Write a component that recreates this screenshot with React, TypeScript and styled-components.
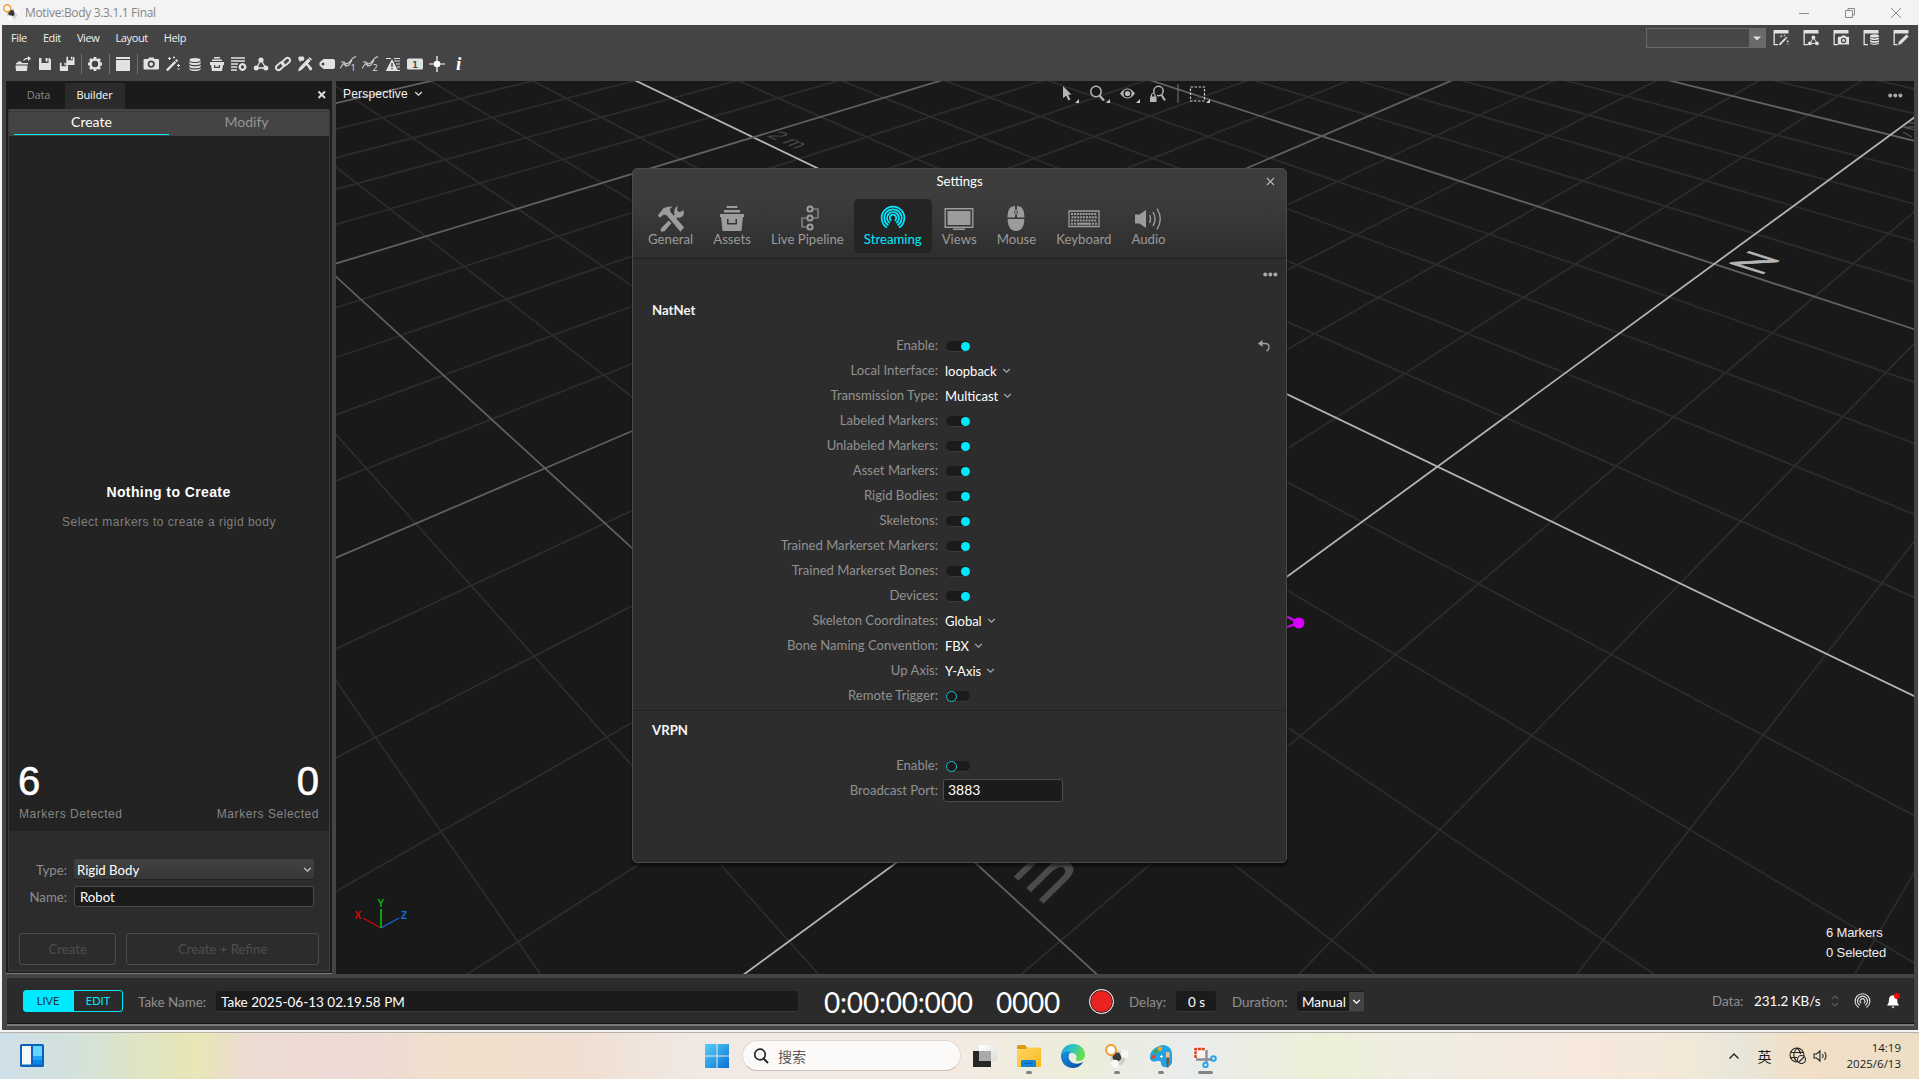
import React from 'react';
import styled, { createGlobalStyle } from 'styled-components';

const CYAN = '#00eaff';
const LATO = 'Lato, "Noto Sans", sans-serif';
const ARIAL = '"Liberation Sans", Arial, sans-serif';
const SEGOE = '"Open Sans", "Noto Sans CJK SC", sans-serif';

const GlobalStyle = createGlobalStyle`
  * { box-sizing: border-box; }
  html, body { margin: 0; padding: 0; overflow: hidden; }
  body { background: #f3f3f3; font-family: ${LATO}; font-size: 13.2px; }
  svg { display: block; flex: none; }
`;

/* ---------- shell ---------- */

const Desktop = styled.div`
  width: 1919px;
  height: 1079px;
  display: flex;
  flex-direction: column;
  overflow: hidden;
  background: #f3f3f3;
`;

const TitleBar = styled.header`
  flex: none;
  height: 25px;
  display: flex;
  align-items: center;
  padding: 0 17px 0 3px;
  background: #f3f3f3;
  color: #868686;
  font: 12px/25px ${SEGOE};
`;

const TitleText = styled.span`
  margin-left: 5px;
  flex: 1;
  letter-spacing: -0.33px;
`;

const WindowButtons = styled.div`
  display: flex;
  gap: 34px;
`;

const AppFrame = styled.div`
  flex: none;
  height: 1005px;
  margin: 0 1px 0 2px;
  background: #444;
  display: flex;
  flex-direction: column;
`;

const TopBars = styled.div`
  flex: none;
  height: 56px;
  display: flex;
  justify-content: space-between;
`;

const MenuRow = styled.nav`
  display: flex;
  gap: 16px;
  padding: 5px 0 0 9px;
  height: 28px;
  color: #f0f0f0;
  font: 11px/16px ${SEGOE};
  letter-spacing: -0.38px;
`;

const ToolRow = styled.div`
  display: flex;
  align-items: center;
  height: 22px;
  padding-left: 10px;
`;

const ToolCell = styled.div`
  width: 22px;
  height: 22px;
  display: flex;
  align-items: center;
  justify-content: center;
`;

const ToolSep = styled.div`
  width: 6px;
  height: 20px;
  display: flex;
  justify-content: center;
  &::before { content: ''; width: 1px; background: #6d6d6d; }
`;

const LayoutTools = styled.div`
  display: flex;
  align-items: center;
  height: 20px;
  margin: 3px 9px 0 0;
`;

const LayoutCombo = styled.div`
  width: 120px;
  height: 20px;
  border: 1px solid #6a6a6a;
  background: #474747;
  display: flex;
  justify-content: flex-end;
  margin-right: 6px;
`;

const ComboArrow = styled.div`
  width: 16px;
  background: #6a6a6a;
  display: flex;
  align-items: center;
  justify-content: center;
`;

const LayoutCell = styled.div`
  width: 30px;
  display: flex;
  padding-left: 1px;
  &:last-child { width: 17px; }
`;

const Main = styled.main`
  flex: none;
  height: 893px;
  display: flex;
  gap: 4px;
  padding: 0 4px 0 4px;
`;

/* ---------- left panel ---------- */

const Panel = styled.aside`
  width: 326px;
  flex: none;
  display: flex;
  flex-direction: column;
  background: #2c2c2c;
  border-bottom: 1px solid #777;
`;

const DockTabs = styled.div`
  flex: none;
  height: 28px;
  background: #1b1b1b;
  display: flex;
  align-items: flex-end;
  font: 11px/24px ${SEGOE};
  letter-spacing: -0.1px;
`;

const DockTab = styled.div<{ $active?: boolean }>`
  height: 26px;
  width: ${p => (p.$active ? 60 : 59)}px;
  padding-left: ${p => (p.$active ? 0 : 6)}px;
  padding-right: ${p => (p.$active ? 1 : 0)}px;
  text-align: center;
  color: ${p => (p.$active ? '#fff' : '#8b8b8b')};
  background: ${p => (p.$active ? '#2b2b2b' : 'transparent')};
`;

const DockClose = styled.div`
  margin-left: auto;
  width: 15px;
  height: 28px;
  display: flex;
  align-items: center;
`;

const PanelInner = styled.div`
  flex: 1;
  display: flex;
  flex-direction: column;
  border: solid #1d1d1d;
  border-width: 0 2px 1px;
  outline: 1px solid #3a3a3a;
  outline-offset: -3px;
  padding: 0 1px 2px;
`;

const SubTabs = styled.div`
  flex: none;
  height: 27px;
  display: flex;
  background: #444;
  padding: 0 5px;
`;

const SubTab = styled.div<{ $active?: boolean }>`
  flex: 1;
  height: 26px;
  text-align: center;
  line-height: 26px;
  font-size: 14px;
  color: ${p => (p.$active ? '#fff' : '#969696')};
  border-bottom: 1.5px solid ${p => (p.$active ? CYAN : 'transparent')};
`;

const CreateBody = styled.div`
  flex: none;
  height: 695px;
  background: #232323;
  display: flex;
  flex-direction: column;
  font-family: ${ARIAL};
  padding: 0 10px;
`;

const EmptyState = styled.div`
  margin-top: 347px;
  text-align: center;
`;

const EmptyTitle = styled.div`
  color: #fff;
  font-weight: 700;
  font-size: 14px;
  line-height: 18px;
  letter-spacing: 0.4px;
  padding-right: 1px;
`;

const EmptyHint = styled.div`
  color: #7f7f7f;
  font-size: 12px;
  line-height: 16px;
  margin-top: 13px;
  letter-spacing: 0.5px;
`;

const Counters = styled.div`
  margin-top: auto;
  display: flex;
  justify-content: space-between;
  padding-bottom: 9px;
`;

const Counter = styled.div<{ $right?: boolean }>`
  text-align: ${p => (p.$right ? 'right' : 'left')};
`;

const CounterValue = styled.div`
  color: #fff;
  font-size: 40px;
  line-height: 40px;
  -webkit-text-stroke: 0.6px #fff;
  margin: 0 0 0 -1px;
`;

const CounterLabel = styled.div`
  color: #858585;
  font-size: 12px;
  line-height: 16px;
  letter-spacing: 0.55px;
  margin-top: 5px;
`;

const CreateForm = styled.div`
  flex: 1;
  display: flex;
  flex-direction: column;
  padding: 28px 10px 5px;
`;

const FormRow = styled.label`
  display: flex;
  align-items: center;
  gap: 7px;
  height: 21px;
  margin-bottom: 6px;
  padding-right: 5px;
  & > span { width: 48px; text-align: right; color: #8e8e8e; font-size: 13.2px; }
`;

const PanelSelect = styled.div`
  flex: 1;
  height: 21px;
  display: flex;
  align-items: center;
  justify-content: space-between;
  padding: 1px 2px 0 3px;
  border-radius: 3px;
  background: linear-gradient(#424242, #373737);
  border-bottom: 1px solid #222;
  color: #fff;
  font-size: 13.2px;
`;

const PanelInput = styled.div`
  flex: 1;
  height: 21px;
  padding-left: 5px;
  border: 1px solid #4b4b4b;
  border-radius: 3px;
  background: #1b1b1b;
  color: #fff;
  font-size: 13.2px;
  line-height: 20px;
`;

const FormButtons = styled.div`
  margin-top: auto;
  display: flex;
  gap: 10px;
`;

const GhostButton = styled.div<{ $grow: number }>`
  flex: ${p => p.$grow} 0 0;
  height: 32px;
  border: 1px solid #4c4c4c;
  border-radius: 3px;
  color: #4f4f4f;
  text-align: center;
  font-size: 13.2px;
  line-height: 31px;
`;

/* ---------- viewport ---------- */

const Viewport = styled.section`
  position: relative;
  flex: 1;
  background: #191919;
  overflow: hidden;
`;

const Scene = styled.svg`
  position: absolute;
  inset: 0;
`;

const ViewportBar = styled.div`
  position: relative;
  height: 28px;
  display: grid;
  grid-template-columns: 717px 1fr 15px;
  align-items: center;
  padding: 0 11px 0 7px;
`;

const CameraPicker = styled.div`
  display: flex;
  align-items: center;
  gap: 6px;
  color: #f2f2f2;
  font: 12px/16px ${ARIAL};
  letter-spacing: 0.2px;
  padding-bottom: 3px;
`;

const ViewTools = styled.div`
  display: flex;
  align-items: center;
  padding-bottom: 3px;
`;

const ViewportStats = styled.div`
  position: absolute;
  right: 28px;
  bottom: 11px;
  color: #efefef;
  font: 13px/20px ${ARIAL};
  letter-spacing: -0.15px;
`;

/* ---------- settings window ---------- */

const Dialog = styled.div`
  position: absolute;
  left: 296px;
  top: 87px;
  width: 655px;
  height: 695px;
  border: 1px solid #4c4c4c;
  border-radius: 5px;
  background: #2d2d2d;
  box-shadow: 0 3px 3px rgba(0, 0, 0, 0.55);
  display: flex;
  flex-direction: column;
  overflow: hidden;
`;

const DialogHead = styled.div`
  flex: none;
  height: 90px;
  background: linear-gradient(#3d3d3d 30%, #2e2e2e);
  border-bottom: 1px solid #1f1f1f;
`;

const DialogTitle = styled.div`
  height: 30px;
  display: grid;
  grid-template-columns: 32px 1fr 32px;
  align-items: center;
  justify-items: center;
  color: #fff;
  padding-bottom: 6px;
`;

const DialogTabs = styled.div`
  display: flex;
  padding-left: 5px;
`;

const DialogTab = styled.div<{ $active?: boolean }>`
  height: 54px;
  padding: 6px 10px 0;
  border-radius: 5px;
  display: flex;
  flex-direction: column;
  align-items: center;
  color: ${p => (p.$active ? CYAN : '#9a9a9a')};
  background: ${p => (p.$active ? '#242424' : 'transparent')};
  & > svg { height: 27px; }
  & > span { line-height: 15px; }
`;

const DialogBody = styled.div`
  flex: 1;
  display: flex;
  flex-direction: column;
`;

const MoreRow = styled.div`
  display: flex;
  justify-content: flex-end;
  height: 33px;
  padding: 13px 8px 0 0;
`;

const Section = styled.section`
  padding-bottom: 2px;
  & + & { border-top: 1px solid #222; }
`;

const SectionTitle = styled.h2<{ $top: number }>`
  margin: 0;
  padding: ${p => p.$top}px 0 0 19px;
  height: ${p => p.$top + 31}px;
  font-size: 13.2px;
  line-height: 16px;
  font-weight: 700;
  color: #f4f4f4;
`;

const SettingRow = styled.div`
  height: 25px;
  display: grid;
  grid-template-columns: 305px 1fr 28px;
  align-items: center;
  column-gap: 5px;
  & > span:first-child { text-align: right; color: #919191; line-height: 20px; padding-bottom: 1px; font-size: 13.1px; }
`;

const Toggle = styled.i<{ $on: boolean }>`
  width: 24px;
  height: 11px;
  margin: 2px 0 0 3px;
  border-radius: 5px;
  background: #1b1b1b;
  border-bottom: 1px solid #3b3b3b;
  display: flex;
  align-items: center;
  justify-content: ${p => (p.$on ? 'flex-end' : 'flex-start')};
  &::before {
    content: '';
    width: 9px;
    height: 9px;
    border-radius: 50%;
    background: ${p => (p.$on ? CYAN : '#1b1b1b')};
    border: ${p => (p.$on ? 'none' : '1px solid #19c4d4')};
  }
`;

const Choice = styled.div`
  display: flex;
  align-items: center;
  gap: 5px;
  padding: 0 0 0 2px;
  color: #fff;
  font-size: 13px;
`;

const PortInput = styled.div`
  width: 120px;
  height: 23px;
  border: 1px solid #4d4d4d;
  border-radius: 3px;
  background: #1b1b1b;
  color: #fff;
  padding-left: 4px;
  font-size: 14px;
  line-height: 20px;
`;

/* ---------- transport bar ---------- */

const Transport = styled.footer`
  flex: none;
  height: 48px;
  margin: 4px 4px 0 5px;
  background: #2b2b2b;
  border-bottom: 2px solid #777;
  box-shadow: inset 0 -1px 0 #111;
  display: flex;
  align-items: center;
  padding: 0 13px 0 16px;
  color: #fff;
`;

const ModeSwitch = styled.div`
  width: 100px;
  height: 22px;
  border: 1px solid ${CYAN};
  border-radius: 3px;
  display: flex;
  font-size: 11px;
  line-height: 20px;
  text-align: center;
`;

const Mode = styled.div<{ $active?: boolean }>`
  flex: 1;
  padding-right: ${p => (p.$active ? 2 : 0)}px;
  color: ${p => (p.$active ? '#14343a' : CYAN)};
  background: ${p => (p.$active ? CYAN : 'transparent')};
`;

const BarLabel = styled.span<{ $w: number; $ml: number }>`
  width: ${p => p.$w}px;
  margin-left: ${p => p.$ml}px;
  flex: none;
  white-space: nowrap;
  color: #8f8f8f;
  font-size: 13.4px;
  line-height: 20px;
  padding-top: 1px;
`;

const DarkField = styled.div<{ $w: number; $ml: number; $center?: boolean }>`
  width: ${p => p.$w}px;
  margin-left: ${p => p.$ml}px;
  flex: none;
  height: 21px;
  border-radius: 3px;
  background: #1b1b1b;
  border-bottom: 1px solid #383838;
  padding-left: ${p => (p.$center ? 1 : 5)}px;
  line-height: 22px;
  font-size: 13.5px;
  display: flex;
  justify-content: ${p => (p.$center ? 'center' : 'space-between')};
`;

const ArrowBox = styled.div`
  width: 15px;
  height: 19px;
  margin-top: 1px;
  background: #434343;
  display: flex;
  align-items: center;
  justify-content: center;
`;

const Clock = styled.div<{ $w: number; $ml: number }>`
  width: ${p => p.$w}px;
  margin-left: ${p => p.$ml}px;
  flex: none;
  font-size: 28px;
  line-height: 34px;
  padding-top: 2px;
  white-space: nowrap;
  letter-spacing: -0.2px;
`;

const Record = styled.div`
  width: 25px;
  height: 25px;
  flex: none;
  margin-left: 28px;
  border: 1.5px solid #fff;
  border-radius: 50%;
  background: #ec2222;
  box-shadow: inset 0 0 0 1px #2b2b2b;
`;

const DataGroup = styled.div`
  margin-left: auto;
  display: flex;
  align-items: center;
  font-size: 13.4px;
  & > span:first-child { color: #8f8f8f; width: 42px; }
  & > span:nth-child(2) { width: 75px; white-space: nowrap; }
`;

/* ---------- taskbar ---------- */

const Taskbar = styled.div`
  flex: none;
  margin-top: 2px;
  height: 47px;
  border-top: 1px solid #b5b1ab;
  display: grid;
  grid-template-columns: 705px 1fr auto;
  align-items: center;
  padding-bottom: 1px;
  background: linear-gradient(90deg, #cfdfe9 0, #d3e2da 80px, #dfe5c4 140px, #e9e6b6 195px, #ecdcd3 250px, #eedad5 350px,
    #f1e0cc 470px, #f0dfd2 580px, #f1e9e4 700px, #f4eae3 950px, #eceddb 1080px, #e9ecec 1190px, #edf0d8 1320px,
    #f0ede3 1420px, #f6e8dd 1580px, #f3e9d8 1680px, #e8e6da 1740px, #f1dfc6 1800px, #ecdfc6 1919px);
  font-family: ${SEGOE};
  color: #1c1c1c;
`;

const Widgets = styled.div`
  padding: 0 0 0 20px;
`;

const TaskCenter = styled.div`
  display: flex;
  align-items: center;
`;

const SearchPill = styled.div`
  width: 219px;
  height: 31px;
  margin: 0 12px 0 13px;
  border-radius: 16px;
  background: #fcfaf8;
  border: 1px solid #e2d9d2;
  border-bottom-color: #c9c1bb;
  display: flex;
  align-items: center;
  gap: 9px;
  padding-left: 10px;
  font: 14px/28px "Noto Sans CJK SC", sans-serif;
  color: #5b5b5b;
`;

const TaskIcon = styled.div<{ $run?: number }>`
  position: relative;
  width: 44px;
  height: 24px;
  &::after {
    content: '';
    position: absolute;
    left: ${p => 12 - (p.$run || 0) / 2}px;
    top: 27px;
    width: ${p => p.$run || 0}px;
    height: 3px;
    border-radius: 2px;
    background: #858382;
  }
`;

const Tray = styled.div`
  display: flex;
  align-items: center;
  padding-right: 18px;
`;

const ImeLabel = styled.span`
  font: 14px/20px "Noto Sans CJK SC", sans-serif;
  margin: 0 17px 0 18px;
`;

const DateTime = styled.div`
  margin-left: 18px;
  text-align: right;
  font-size: 11.5px;
  line-height: 16px;
`;

/* ---------- icons ---------- */

type IconProps = { w?: number; h?: number; vb?: string; children: React.ReactNode; c?: string };

const Icon = ({ w = 16, h = 16, vb = '0 0 16 16', c = '#e2e2e2', children }: IconProps) => (
  <svg width={w} height={h} viewBox={vb} fill={c} stroke="none">{children}</svg>
);

const Chevron = ({ c = '#ddd', s = 9 }: { c?: string; s?: number }) => (
  <Icon w={s} h={s} vb="0 0 9 9"><path d="M1.2 3l3.3 3.2L7.8 3" fill="none" stroke={c} strokeWidth="1.3" /></Icon>
);

const Dots = ({ c = '#a8a8a8' }: { c?: string }) => (
  <Icon w={15} h={5} vb="0 0 15 5" c={c}><circle cx="2.2" cy="2.5" r="2" /><circle cx="7.3" cy="2.5" r="2" /><circle cx="12.4" cy="2.5" r="2" /></Icon>
);

const Disk = () => <path fillRule="evenodd" d="M2 2h2.500v5h7V2h1L14 3.500V14H2zM8.600 2h2v3.500h-2z" />;
const Camera = () => <path fillRule="evenodd" d="M5 3l1-1.500h4.500L11.500 3H15q1 0 1 1v8.500q0 1-1 1H1.500q-1 0-1-1V4q0-1 1-1zM8.200 4.500a3.600 3.600 0 100 7.200 3.600 3.600 0 000-7.200zm0 1.700a1.900 1.900 0 110 3.800 1.900 1.900 0 010-3.800z" />;
const Stack = () => (
  <g>
    <ellipse cx="8" cy="3.200" rx="6" ry="2.200" />
    <path d="M2 4.700c1 2.300 11 2.300 12 0v2.200c-1 2.300-11 2.300-12 0zM2 8.200c1 2.300 11 2.300 12 0v2.200c-1 2.300-11 2.300-12 0zM2 11.700c1 2.300 11 2.300 12 0v1c-1 3-11 3-12 0z" />
  </g>
);
const Nodes = () => (
  <g>
    <circle cx="8" cy="4" r="2.600" /><circle cx="3.200" cy="12" r="2.500" /><circle cx="12.800" cy="12" r="2.500" />
    <path d="M8 4L3.500 12h9.300z" fill="none" stroke="#e2e2e2" strokeWidth="1.300" />
  </g>
);
const Wand = () => (
  <g>
    <path d="M1 13.500L9.500 5l1.700 1.700L2.700 15.200zM10 4.500l1.500-1.500 1.700 1.700-1.500 1.500z" />
    <path d="M4.500 1v3M3 2.500h3M9 .5v2M8 1.500h2M13.500 8v3M12 9.500h3M12.500 13h2" stroke="#e2e2e2" strokeWidth="1" />
  </g>
);
const Graph = ({ n }: { n: string }) => (
  <Icon w={19} h={20} vb="0 -2 19 20">
    <path d="M1 6h3l2 2 2.500-1L13 2l3-1.500M0 12.500l3.500-5L6 10l3-1 3-5" fill="none" stroke="#cfcfcf" strokeWidth="1.100" />
    <text x="10.500" y="15" fontSize="9" fontFamily="Open Sans, sans-serif">{n}</text>
  </Icon>
);
const Tools = ({ c = '#e2e2e2' }: { c?: string }) => (
  <g fill={c}>
    <path d="M1 7.500L0 6l3.500-4.500Q6 .4 9 .6L7.200 2.200 7.700 4 16 13.500 13.700 16 5.300 5.900 3.600 5.500z" />
    <path d="M12 .3l-.4 2.600 1.500 1.200L15.600 2.900q.8 3-1.300 4.200-1.300.6-2.600.2l-1.300 1.400-1.600-1.600 1.300-1.400Q9.400 1.500 12 .3zM6.600 9.200l1.600 1.600L4 15.700 1.800 16 1.600 14.200z" />
  </g>
);

const TOOLBAR: (React.ReactNode | '|')[] = [
  <Icon key="open" w={18}><path d="M1 7h1l1-1.500h3L7 7h6v1.500H1zM.500 9.500h12L12 15H1z" /><path d="M8.500 4.500q2-2.500 5-2" fill="none" stroke="#e2e2e2" strokeWidth="1.200" /><path d="M13 0l3 2.500L13 5z" /></Icon>,
  <Icon key="save"><Disk /></Icon>,
  <Icon key="saveall"><g transform="translate(-.5 5.500) scale(.68)"><Disk /></g><g transform="translate(6 -.5) scale(.68)"><Disk /></g></Icon>,
  '|',
  <Icon key="gear"><circle cx="8" cy="8" r="4.500" fill="none" stroke="#e2e2e2" strokeWidth="2.600" /><path d="M8 1v2M8 13v2M1 8h2M13 8h2M3 3l1.500 1.500M11.500 11.500L13 13M3 13l1.500-1.500M11.500 4.500L13 3" stroke="#e2e2e2" strokeWidth="2.800" /></Icon>,
  '|',
  <Icon key="win"><path d="M1 1h14v2H1zM1 4h14v11H1z" /></Icon>,
  '|',
  <Icon key="cam"><Camera /></Icon>,
  <Icon key="wand"><Wand /></Icon>,
  <Icon key="db" h={15}><Stack /></Icon>,
  <Icon key="box"><path fillRule="evenodd" d="M5 1h6v1.500H5zM3 3.500h10V5H3zM1 6h14v3h-1L13 15H3L2 9H1zM5 9v3h6V9H9.800v1.800H6.200V9z" /></Icon>,
  <Icon key="list"><path d="M0 2h14M0 5h14M0 8h7M0 11h6M0 14h6" stroke="#e2e2e2" strokeWidth="1.300" /><circle cx="11.500" cy="11" r="2.700" fill="none" stroke="#e2e2e2" strokeWidth="2" /><path d="M11.500 7v1.500M11.500 13.500V15M7.500 11H9M14 11h1.500" stroke="#e2e2e2" strokeWidth="1.600" /></Icon>,
  <Icon key="nodes"><Nodes /></Icon>,
  <Icon key="link"><g fill="none" stroke="#e2e2e2" strokeWidth="1.900"><rect x="6.500" y="3.200" width="9" height="5" rx="2.500" transform="rotate(-42 11 5.700)" /><rect x=".5" y="7.800" width="9" height="5" rx="2.500" transform="rotate(-42 5 10.300)" /></g></Icon>,
  <Icon key="tools"><path d="M1 2l1.500-1.500h4L7.500 3 6 5l-1.500-.5L3 6zM9.500 9l1.500-1.500L15 12q.5 2-2 2.500zM12.500 1L15 3.500 4.500 14 1 15.500 2 12z" /><path d="M10.500 1.500l4 4" stroke="#444" strokeWidth=".8" /></Icon>,
  <Icon key="tag"><path fillRule="evenodd" d="M4.500 3H14q2 0 2 2v6q0 2-2 2H4.500L.5 9.500v-3zM4 6.500a1.500 1.500 0 100 3 1.500 1.500 0 000-3z" /></Icon>,
  <Graph key="g1" n="1" />,
  <Graph key="g2" n="2" />,
  <Icon key="warn"><path d="M1 2.500h5M9 2.500h6M9 5h6M11 8h4M12 11h3M1 14.500h14" stroke="#e2e2e2" strokeWidth="1.200" /><path fillRule="evenodd" d="M7 3l6 11.500H1zM6.300 7v4h1.400V7zm0 5v1.300h1.400V12z" /></Icon>,
  <Icon key="one"><path d="M1.500 2.500h13q1.500 0 1.500 1.500v8q0 1.500-1.500 1.500h-13Q0 13.500 0 12V4q0-1.500 1.500-1.500z" /><text x="5.200" y="11.600" fontSize="9.500" fontWeight="700" fontFamily="DejaVu Sans Mono, monospace" fill="#444">1</text></Icon>,
  <Icon key="spark" c="#fff"><path d="M8 0v16M0 8h16" stroke="#fff" strokeWidth="1.200" /><circle cx="8" cy="8" r="3.300" /></Icon>,
  <Icon key="info" c="#fff" h={22} vb="0 -3 16 22"><text x="5" y="14" fontSize="19" fontWeight="700" fontStyle="italic" fontFamily="Liberation Serif, serif">i</text></Icon>,
];

const WinFrame = () => <path d="M.500 0h15v3.500H.500zM.500 3h1.300v11H5v1.300H.500z" />;

const LAYOUT_ICONS = [
  <><WinFrame /><g transform="translate(5 4.500) scale(.72)"><Wand /></g></>,
  <><WinFrame /><g transform="translate(4.500 4.500) scale(.74)"><Nodes /></g></>,
  <><WinFrame /><g transform="translate(4.500 4.500) scale(.74)"><Camera /></g></>,
  <><WinFrame /><g transform="translate(5.500 3.500) scale(.76)"><path d="M0 1h16v15H0z" fill="#444" /><Stack /></g></>,
  <><WinFrame /><path d="M4.500 15.500l1-3.700L13.500 4l2.500 2.500L8 14.500z" stroke="#444" strokeWidth=".8" /></>,
];

const MotiveLogo = ({ s = 16 }: { s?: number }) => (
  <Icon w={s} h={s} vb="0 0 24 24">
    <circle cx="13" cy="14" r="7.500" fill="#777" opacity=".25" />
    <circle cx="12" cy="13" r="4.400" fill="#3a3a3a" />
    <circle cx="19.500" cy="10" r="4" fill="#f7f7f7" /><circle cx="10" cy="19.800" r="4" fill="#fafafa" />
    <circle cx="6" cy="6" r="4.900" fill="#fff" stroke="#f09a2c" strokeWidth="2" />
  </Icon>
);

const Beacon = ({ size, c }: { size: number; c: string }) => {
  const arcs = size < 20 ? [3.500, 7, 10.500] : [3, 5.500, 8, 10.500];
  const at = (r: number, deg: number) =>
    `${(12 + r * Math.cos((deg * Math.PI) / 180)).toFixed(2)} ${(11.500 + r * Math.sin((deg * Math.PI) / 180)).toFixed(2)}`;
  return (
    <Icon w={size} h={size} vb="0 0 24 24" c={c}>
      {arcs.map(r => (
        <path key={r} d={`M${at(r, 122)}A${r} ${r} 0 1 1 ${at(r, 58)}`} fill="none" stroke={c} strokeWidth="1.600" />
      ))}
    </Icon>
  );
};

const TAB_COLOR = '#9c9c9c';
const DIALOG_TABS: { label: string; icon: React.ReactNode; active?: boolean }[] = [
  { label: 'General', icon: <Icon w={28} h={27} vb="-.3 -.3 16.500 16.500"><Tools c={TAB_COLOR} /></Icon> },
  { label: 'Assets', icon: <Icon w={26} h={27} vb="0 0 26 27" c={TAB_COLOR}><path fillRule="evenodd" d="M7.500 1h11v2h-11zM5 5h16v2.500H5zM1 9h24v3h-1l-1.500 14h-19L2 12H1zM8 14v5.500h10V14h-1.500v4h-7v-4z" /></Icon> },
  { label: 'Live Pipeline', icon: <Icon w={26} h={27} vb="-6 0 26 27"><g fill="none" stroke={TAB_COLOR}><g strokeWidth="2"><circle cx="10" cy="4" r="2.600" /><circle cx="10" cy="13" r="2.600" /><circle cx="10" cy="22" r="2.600" /></g><path d="M13.500 4H18v9h-4.500M6.500 13H2v9h4.500" strokeWidth="1.200" /></g></Icon> },
  { label: 'Streaming', icon: <Beacon size={26} c={CYAN} />, active: true },
  { label: 'Views', icon: <Icon w={30} h={27} vb="0 0 30 27" c={TAB_COLOR}><path d="M1.200 3.700h27.600v18.600H1.200z" fill="none" stroke={TAB_COLOR} strokeWidth="1.400" /><path d="M3.500 6h23v14h-23zM9 23.500h12V25H9z" /></Icon> },
  { label: 'Mouse', icon: <Icon w={18} h={27} vb="0 0 18 27" c={TAB_COLOR}><path d="M8 1C3 1 .700 4.500.500 12.500H8V9Q6.500 8 8 5zM10 1c5 0 7.300 3.500 7.500 11.500H10V9q1.500-1 0-4zM.600 14h16.800Q17 26 9 26T.600 14z" /><rect x="8.300" y="4.500" width="1.400" height="5.500" rx=".7" /></Icon> },
  { label: 'Keyboard', icon: <Icon w={32} h={27} vb="0 0 32 27" c={TAB_COLOR}><path d="M1 6h30v15.500H1z" fill="none" stroke={TAB_COLOR} strokeWidth="1.300" /><path d="M3 9h26M3.500 12.200H29M3 15.400h26" stroke={TAB_COLOR} strokeWidth="2" strokeDasharray="2 .9" /><path d="M3 17.700h2v2H3zM6 17.700h2v2H6zM9 17.700h14v2H9zM24 17.700h2v2h-2zM27 17.700h2v2h-2z" /></Icon> },
  { label: 'Audio', icon: <Icon w={29} h={27} vb="0 0 29 27" c={TAB_COLOR}><path d="M1 9.500h4.500L12 5v18l-6.500-4.500H1z" /><path d="M15.500 10q2 4 0 8M19 7q4 7 0 14M23 3.500q6.500 10.500 0 21" fill="none" stroke={TAB_COLOR} strokeWidth="1.400" /></Icon> },
];

/* ---------- ground grid ---------- */

type Pt = [number, number];

/* Ground positions in metres and the pixels they land on. */
const ANCHORS: { g: Pt; s: Pt }[] = [
  { g: [2, 0], s: [417.3, 56.3] },
  { g: [1, 1], s: [209, 387.3] },
  { g: [0, 1], s: [604.2, 749.7] },
  { g: [0, -1], s: [1378.2, 183] },
];

function solve(rows: number[][]): number[] {
  const n = rows.length;
  const m = rows.map(r => [...r]);
  for (let i = 0; i < n; i++) {
    let p = i;
    for (let j = i + 1; j < n; j++) if (Math.abs(m[j][i]) > Math.abs(m[p][i])) p = j;
    [m[i], m[p]] = [m[p], m[i]];
    for (let j = 0; j < n; j++) {
      if (j === i) continue;
      const f = m[j][i] / m[i][i];
      for (let k = i; k <= n; k++) m[j][k] -= f * m[i][k];
    }
  }
  return m.map((r, i) => r[n] / r[i]);
}

const H = solve(
  ANCHORS.flatMap(({ g: [x, z], s: [u, v] }) => [
    [x, z, 1, 0, 0, 0, -u * x, -u * z, u],
    [0, 0, 0, x, z, 1, -v * x, -v * z, v],
  ]),
);

const depth = (x: number, z: number) => H[6] * x + H[7] * z + 1;
const project = (x: number, z: number): Pt => {
  const w = depth(x, z);
  return [(H[0] * x + H[1] * z + H[2]) / w, (H[3] * x + H[4] * z + H[5]) / w];
};

const SPAN = 8;
const NEAR = 0.05;

/* Trims a ground segment to the part in front of the camera. */
function segment(a: Pt, b: Pt): [Pt, Pt] | null {
  const wa = depth(...a);
  const wb = depth(...b);
  if (wa < NEAR && wb < NEAR) return null;
  const cut = (p: Pt, q: Pt, wp: number, wq: number): Pt => {
    if (wp >= NEAR) return p;
    const t = (NEAR - wp) / (wq - wp);
    return [p[0] + (q[0] - p[0]) * t, p[1] + (q[1] - p[1]) * t];
  };
  return [project(...cut(a, b, wa, wb)), project(...cut(b, a, wb, wa))];
}

function GroundGrid() {
  const minor: React.ReactNode[] = [];
  const major: React.ReactNode[] = [];
  for (let i = -SPAN * 5; i <= SPAN * 5; i++) {
    const v = i / 5;
    const pairs: [Pt, Pt][] = [[[v, -SPAN], [v, SPAN]], [[-SPAN, v], [SPAN, v]]];
    pairs.forEach(([a, b], k) => {
      const s = segment(a, b);
      if (!s) return;
      const color = i === 0 ? '#b4b4b4' : i % 5 === 0 ? '#606060' : '#2c2c2c';
      (i % 5 === 0 ? major : minor).push(
        <line key={`${i}-${k}`} x1={s[0][0]} y1={s[0][1]} x2={s[1][0]} y2={s[1][1]} stroke={color} strokeWidth={1.8} />,
      );
    });
  }
  return <g>{minor}{major}</g>;
}

const SceneView = () => (
  <Scene width="1579" height="893" viewBox="0 0 1579 893">
    <GroundGrid />
    <g fontFamily="Liberation Sans, sans-serif">
      <text transform="matrix(.82 .36 -.95 .36 430 55)" fontSize="22" fill="#484848">2 m</text>
      <text transform="matrix(2 .625 -.84 .62 1392 182)" fontSize="30" fill="#b5b5b5" stroke="#b5b5b5" strokeWidth=".7">Z</text>
      <text transform="matrix(.64 .59 -.95 .93 642 761)" fontSize="64" fill="#4b4b4b" stroke="#4b4b4b" strokeWidth="1.600">1 m</text>
    </g>
    <path d="M1579 42h-6M1579 49l-12-3h12M1576 56l-9-5" fill="none" stroke="#4c4c4c" strokeWidth="1.300" />
    <g stroke="#d800ff" strokeWidth="2"><path d="M963 542L948 534M963 542L948 547" /><circle cx="962.800" cy="542" r="4.600" fill="#d800ff" /></g>
    <g fill="none" strokeWidth="1.200">
      <path d="M45 847L27 837" stroke="#d40a0a" /><path d="M45 847L63 837" stroke="#0a6fdc" />
      <path d="M45 847V828" stroke="#12a012" strokeWidth="2" />
    </g>
    <g fontFamily="Liberation Sans, sans-serif" fontSize="10" fontWeight="700">
      <text x="18.500" y="837.500" fill="#d40a0a">X</text><text x="41.500" y="826" fill="#0fb40f">Y</text><text x="65" y="837.500" fill="#0a6fdc">Z</text>
    </g>
  </Scene>
);

const V = '#b5b5b5';
const Corner = () => <path d="M24 16v4h-4z" fill="#c8c8c8" />;

const ViewportTools = () => (
  <ViewTools>
    <Icon w={28} h={22} vb="0 0 28 22" c={V}><path d="M3 3l8.500 8.500-3.300.3 2.200 4.700-2 .9-2.100-4.700L3 15z" /><path d="M19 16v4h-4z" fill="#c8c8c8" /></Icon>
    <Icon w={31} h={22} vb="0 0 31 22"><circle cx="8" cy="8.500" r="5.200" fill="none" stroke={V} strokeWidth="1.500" /><path d="M11.500 12.500l4.500 5" stroke={V} strokeWidth="2.200" /><path d="M22 16v4h-4z" fill="#c8c8c8" /></Icon>
    <Icon w={30} h={22} vb="0 0 30 22" c={V}><path fillRule="evenodd" d="M1 10.500Q8.500.5 16 10.500 8.500 20.500 1 10.500zM8.500 6.500a4 4 0 100 8 4 4 0 000-8z" /><circle cx="8.500" cy="10.500" r="2.600" /><path d="M21 16v4h-4z" fill="#c8c8c8" /></Icon>
    <Icon w={27} h={22} vb="0 0 27 22" c={V}><circle cx="9.500" cy="8" r="4.700" fill="none" stroke={V} strokeWidth="1.500" /><path d="M12.500 12l3.500 5.500" stroke={V} strokeWidth="2" /><path d="M0 10h8v10H0z" fill="#191919" /><path d="M1 13.500h6.500V19H1z" /><path d="M2.500 14v-2.500q1.800-2.500 3.500 0V14" fill="none" stroke={V} strokeWidth="1.200" /></Icon>
    <Icon w={12} h={22} vb="0 0 12 22" c="#777"><path d="M1.500 1h1v19h-1z" /></Icon>
    <Icon w={26} h={22} vb="0 0 26 22"><rect x="2.500" y="4" width="14" height="14" fill="none" stroke="#ccc" strokeWidth="1.200" strokeDasharray="2.500 1.500" /><g transform="translate(-2 0)"><Corner /></g></Icon>
  </ViewTools>
);

/* ---------- settings ---------- */

type Setting = { label: string; on?: boolean; choice?: string; port?: string; reset?: boolean };

const NATNET: Setting[] = [
  { label: 'Enable:', on: true, reset: true },
  { label: 'Local Interface:', choice: 'loopback' },
  { label: 'Transmission Type:', choice: 'Multicast' },
  { label: 'Labeled Markers:', on: true },
  { label: 'Unlabeled Markers:', on: true },
  { label: 'Asset Markers:', on: true },
  { label: 'Rigid Bodies:', on: true },
  { label: 'Skeletons:', on: true },
  { label: 'Trained Markerset Markers:', on: true },
  { label: 'Trained Markerset Bones:', on: true },
  { label: 'Devices:', on: true },
  { label: 'Skeleton Coordinates:', choice: 'Global' },
  { label: 'Bone Naming Convention:', choice: 'FBX' },
  { label: 'Up Axis:', choice: 'Y-Axis' },
  { label: 'Remote Trigger:', on: false },
];

const VRPN: Setting[] = [
  { label: 'Enable:', on: false },
  { label: 'Broadcast Port:', port: '3883' },
];

const Rows = ({ items }: { items: Setting[] }) => (
  <>
    {items.map(s => (
      <SettingRow key={s.label}>
        <span>{s.label}</span>
        {s.on !== undefined && <Toggle $on={s.on} />}
        {s.choice && <Choice>{s.choice}<Chevron c="#a5a5a5" /></Choice>}
        {s.port && <PortInput>{s.port}</PortInput>}
        {s.reset && <Icon w={13} h={13} vb="0 0 13 13"><path d="M2 4.500h5q4 0 4 3.500 0 3-2.500 4" fill="none" stroke="#a0a0a0" strokeWidth="1.300" /><path d="M0 4.500L4.500 1v7z" fill="#a0a0a0" /></Icon>}
      </SettingRow>
    ))}
  </>
);

const SettingsDialog = () => (
  <Dialog>
    <DialogHead>
      <DialogTitle>
        <i />
        <span>Settings</span>
        <Icon w={9} h={9} vb="0 0 9 9"><path d="M1 1l7 7M8 1L1 8" stroke="#b8b8b8" strokeWidth="1.200" /></Icon>
      </DialogTitle>
      <DialogTabs>
        {DIALOG_TABS.map(t => (
          <DialogTab key={t.label} $active={t.active}>{t.icon}<span>{t.label}</span></DialogTab>
        ))}
      </DialogTabs>
    </DialogHead>
    <DialogBody>
      <MoreRow><Dots /></MoreRow>
      <Section><SectionTitle $top={10}>NatNet</SectionTitle><Rows items={NATNET} /></Section>
      <Section><SectionTitle $top={11}>VRPN</SectionTitle><Rows items={VRPN} /></Section>
    </DialogBody>
  </Dialog>
);

/* ---------- taskbar icons ---------- */

const HiddenDefs = styled.svg`
  position: absolute;
`;

const Defs = () => (
  <HiddenDefs width="0" height="0">
    <defs>
      <linearGradient id="win" x1="0" y1="0" x2="1" y2="1"><stop offset="0" stopColor="#55d0fb" /><stop offset="1" stopColor="#0a6fd0" /></linearGradient>
      <linearGradient id="folder" x1="0" y1="0" x2="1" y2="1"><stop offset="0" stopColor="#ffd867" /><stop offset="1" stopColor="#f8b81c" /></linearGradient>
      <linearGradient id="glass" x1="0" y1="0" x2="1" y2="1"><stop offset="0" stopColor="#fff" /><stop offset="1" stopColor="#dcdcdc" /></linearGradient>
      <linearGradient id="edgeA" x1="0" y1="0" x2="1" y2=".3"><stop offset="0" stopColor="#1ba0dc" /><stop offset=".5" stopColor="#2fc3c7" /><stop offset="1" stopColor="#6ade4a" /></linearGradient>
      <linearGradient id="edgeB" x1="0" y1="0" x2="1" y2="1"><stop offset="0" stopColor="#1593e6" /><stop offset="1" stopColor="#0c4b98" /></linearGradient>
    </defs>
  </HiddenDefs>
);

const App = () => (
  <Desktop>
    <GlobalStyle />
    <Defs />
    <TitleBar>
      <MotiveLogo s={17} />
      <TitleText>Motive:Body 3.3.1.1 Final</TitleText>
      <WindowButtons>
        <Icon w={12} h={12} vb="0 0 12 12"><path d="M1 6.500h10" stroke="#8a8a8a" /></Icon>
        <Icon w={12} h={12} vb="0 0 12 12"><path d="M1.500 3.500h7v7h-7zM4 3V1.500h6.500V8H9" fill="none" stroke="#8a8a8a" /></Icon>
        <Icon w={12} h={12} vb="0 0 12 12"><path d="M1 1l10 10M11 1L1 11" stroke="#8a8a8a" /></Icon>
      </WindowButtons>
    </TitleBar>

    <AppFrame>
      <TopBars>
        <div>
          <MenuRow><span>File</span><span>Edit</span><span>View</span><span>Layout</span><span>Help</span></MenuRow>
          <ToolRow>
            {TOOLBAR.map((t, i) => (t === '|' ? <ToolSep key={i} /> : <ToolCell key={i}>{t}</ToolCell>))}
          </ToolRow>
        </div>
        <LayoutTools>
          <LayoutCombo><ComboArrow><Icon w={8} h={5} vb="0 0 8 5"><path d="M0 .5h8L4 4.500z" /></Icon></ComboArrow></LayoutCombo>
          {LAYOUT_ICONS.map((g, i) => <LayoutCell key={i}><Icon>{g}</Icon></LayoutCell>)}
        </LayoutTools>
      </TopBars>

      <Main>
        <Panel>
          <DockTabs>
            <DockTab>Data</DockTab>
            <DockTab $active>Builder</DockTab>
            <DockClose>
              <Icon w={10} h={10} vb="0 0 10 10"><path d="M1.500 1.500l6.500 6.500M8 1.500L1.500 8" stroke="#ddd" strokeWidth="1.900" /></Icon>
            </DockClose>
          </DockTabs>
          <PanelInner>
            <SubTabs><SubTab $active>Create</SubTab><SubTab>Modify</SubTab></SubTabs>
            <CreateBody>
              <EmptyState>
                <EmptyTitle>Nothing to Create</EmptyTitle>
                <EmptyHint>Select markers to create a rigid body</EmptyHint>
              </EmptyState>
              <Counters>
                <Counter><CounterValue>6</CounterValue><CounterLabel>Markers Detected</CounterLabel></Counter>
                <Counter $right><CounterValue>0</CounterValue><CounterLabel>Markers Selected</CounterLabel></Counter>
              </Counters>
            </CreateBody>
            <CreateForm>
              <FormRow><span>Type:</span><PanelSelect>Rigid Body<Chevron c="#c4c4c4" /></PanelSelect></FormRow>
              <FormRow><span>Name:</span><PanelInput>Robot</PanelInput></FormRow>
              <FormButtons><GhostButton $grow={1}>Create</GhostButton><GhostButton $grow={2}>Create + Refine</GhostButton></FormButtons>
            </CreateForm>
          </PanelInner>
        </Panel>

        <Viewport>
          <SceneView />
          <ViewportBar>
            <CameraPicker>Perspective<Chevron /></CameraPicker>
            <ViewportTools />
            <Dots />
          </ViewportBar>
          <ViewportStats>6 Markers<br />0 Selected</ViewportStats>
          <SettingsDialog />
        </Viewport>
      </Main>

      <Transport>
        <ModeSwitch><Mode $active>LIVE</Mode><Mode>EDIT</Mode></ModeSwitch>
        <BarLabel $w={68} $ml={15}>Take Name:</BarLabel>
        <DarkField $w={582} $ml={10}>Take 2025-06-13 02.19.58 PM</DarkField>
        <Clock $w={149} $ml={26}>0:00:00:000</Clock>
        <Clock $w={65} $ml={23}>0000</Clock>
        <Record />
        <BarLabel $w={37} $ml={15}>Delay:</BarLabel>
        <DarkField $w={40} $ml={10} $center>0 s</DarkField>
        <BarLabel $w={54} $ml={16}>Duration:</BarLabel>
        <DarkField $w={67} $ml={11}>Manual<ArrowBox><Chevron c="#fff" /></ArrowBox></DarkField>
        <DataGroup>
          <span>Data:</span>
          <span>231.2 KB/s</span>
          <Icon w={25} h={14} vb="0 0 25 14"><path d="M3 5l3-3 3 3M3 9l3 3 3-3" fill="none" stroke="#5c5c5c" strokeWidth="1.200" /></Icon>
          <Beacon size={17} c="#e2e2e2" />
          <Icon w={30} h={18} vb="0 0 30 18" c="#fff"><path d="M16 13.500q2-1.500 2-5.500 0-4.500 4-4.800 4.200.3 4.200 4.800 0 4 1.800 5.500zM20.500 14.500h3l-1.500 2z" /><circle cx="26" cy="4" r="3" fill="#e80c0c" /></Icon>
        </DataGroup>
      </Transport>
    </AppFrame>

    <Taskbar>
      <Widgets>
        <Icon w={24} h={23} vb="0 0 24 23"><rect width="24" height="23" rx="1.500" fill="#0b62b8" /><path d="M2 2h9v18.500H2z" fill="#f6f6f6" /><path d="M13 2h9v11h-9z" fill="#62d6ff" /><path d="M13 12h9v4.500h-9z" fill="#1fa3fa" /><path d="M13 16h9v4.500h-9z" fill="#0a84ea" /></Icon>
      </Widgets>
      <TaskCenter>
        <Icon w={24} h={24} vb="0 0 24 24"><path d="M0 0h11.500v11.500H0zM12.500 0H24v11.500H12.500zM0 12.500h11.500V24H0zM12.500 12.500H24V24H12.500z" fill="url(#win)" /></Icon>
        <SearchPill>
          <Icon w={16} h={16}><circle cx="7" cy="6.500" r="5.300" fill="none" stroke="#262626" strokeWidth="1.700" /><path d="M10.500 10.500l4.500 4.500" stroke="#262626" strokeWidth="2" /></Icon>
          搜索
        </SearchPill>
        <TaskIcon><Icon w={24} h={24} vb="0 0 24 24"><path d="M0 7h18v16H0z" fill="#262626" /><path d="M6 1h18v16H6z" fill="url(#glass)" /><path d="M6 7h12v10H6z" fill="#a9a9a9" /></Icon></TaskIcon>
        <TaskIcon $run={6}><Icon w={24} h={24} vb="0 0 24 24"><path d="M0 2.500Q0 1 1.500 1H8l2 2.500V6H0z" fill="#dc9a0c" /><path d="M0 5h9l1.500-1.500H24V23H0z" fill="url(#folder)" /><path d="M4 23v-5.500Q4 16 5.500 16h12q1.500 0 1.500 1.500V23z" fill="#1384d8" /><path d="M7.500 19.500h8" stroke="#0c62b0" /></Icon></TaskIcon>
        <TaskIcon><Icon w={24} h={24} vb="0 0 24 24"><path d="M0 12C0 5 5 0 12 0s12 5 12 10.500c0 4-3 6.500-6 6.500-2.500 0-3.500-1-3-2 1.500-2 .5-6-4.500-6C6 9 2 10 0 13z" fill="url(#edgeA)" /><path d="M0 12c1-4 5.500-5.500 9.500-4C6.500 11 7 17 12 19c4 1.500 8 .5 10.500-1.500C20 22 16 24 12 24 5 24 0 19 0 12z" fill="url(#edgeB)" /></Icon></TaskIcon>
        <TaskIcon $run={6}><MotiveLogo s={24} /></TaskIcon>
        <TaskIcon $run={6}><Icon w={24} h={24} vb="0 0 24 24"><path d="M10 2C16-1 23 3 23 10v9q-2 5-8 4-3-1-3-4 0-3-4-2-5 2-7-2Q0 6 10 2z" fill="#24a3e4" /><circle cx="11" cy="4.800" r="2.200" fill="#f2a91c" /><circle cx="7" cy="7.500" r="2.200" fill="#4aa93c" /><circle cx="4.500" cy="13" r="2" fill="#dc4a2a" /><path d="M11 12.500h3M12.500 11v3" stroke="#fff" /><path d="M17 8h3.500v6H17z" fill="#e6c49a" /><path d="M17.500 13.500h2.500l-.5 10h-1.500z" fill="#8a4b14" /></Icon></TaskIcon>
        <TaskIcon $run={15}><Icon w={24} h={24} vb="0 0 24 24"><path d="M0 2h14v14H0z" fill="#f6f3f0" /><path d="M2.500 14V5h10" fill="none" stroke="#d83b12" strokeWidth="2.400" strokeDasharray="3 .8" /><path d="M13.500 6v12M3 15.500h15" stroke="#8b8f95" strokeWidth="2.400" fill="none" /><circle cx="20.500" cy="14.500" r="2.300" fill="none" stroke="#2aa4e8" strokeWidth="2" /><circle cx="12.500" cy="21" r="2.200" fill="none" stroke="#2aa4e8" strokeWidth="2" /></Icon></TaskIcon>
      </TaskCenter>
      <Tray>
        <Icon w={12} h={12} vb="0 0 12 12"><path d="M1.500 8.500L6 4l4.500 4.500" fill="none" stroke="#222" strokeWidth="1.400" /></Icon>
        <ImeLabel>英</ImeLabel>
        <Icon w={17} h={17} vb="0 0 17 17"><g fill="none" stroke="#222" strokeWidth="1.100"><circle cx="8" cy="8" r="7" /><path d="M8 1Q1.500 8 8 15M8 1q3.500 3 3.500 6M1 5.500h14M1 10.500h7" /><circle cx="12.500" cy="12.500" r="4" fill="#f1e4d2" /><path d="M10 15l5-5" /></g></Icon>
        <Icon w={23} h={16} vb="-7 0 23 16"><path d="M1 6h2.500L7 3v10L3.500 10H1zM9.500 6q1.500 2 0 4M11.500 4q3 4 0 8" fill="none" stroke="#222" strokeWidth="1.100" /></Icon>
        <DateTime>14:19<br />2025/6/13</DateTime>
      </Tray>
    </Taskbar>
  </Desktop>
);

export default App;
